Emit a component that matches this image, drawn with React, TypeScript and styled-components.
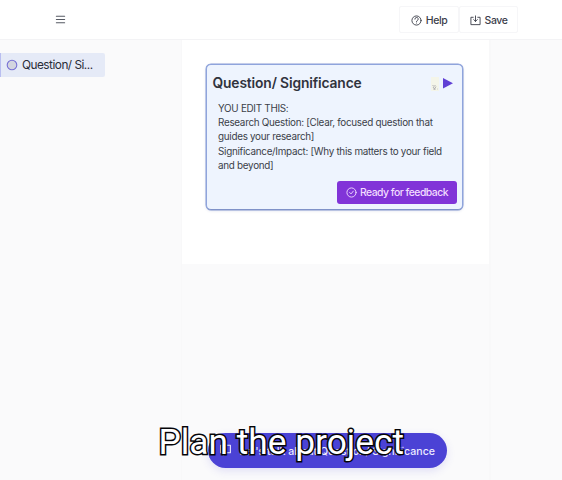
import React from 'react';
import styled, { createGlobalStyle } from 'styled-components';

const GlobalStyle = createGlobalStyle`
  *, *::before, *::after { box-sizing: border-box; }
  body { margin: 0; background: #fafafb; font-family: Inter, sans-serif; overflow: hidden; }
`;

const Page = styled.div`
  position: relative;
  display: flex;
  flex-direction: column;
  width: 562px;
  height: 480px;
  overflow: hidden;
  background: #fafafb;
  color: #30333d;
`;

const Header = styled.header`
  display: flex;
  align-items: center;
  justify-content: space-between;
  flex: none;
  height: 40px;
  padding: 0 44px 0 55px;
  background: #fff;
  border-bottom: 1px solid #f3f3f5;
`;

const MenuButton = styled.button`
  display: flex;
  padding: 0;
  border: 0;
  background: none;
  color: #555963;
`;

const Actions = styled.div`
  display: flex;
`;

const ActionButton = styled.button<{ $width: number }>`
  display: flex;
  align-items: center;
  justify-content: center;
  gap: 4px;
  width: ${(p) => p.$width}px;
  height: 27px;
  padding: 1px 0 0;
  border: 1px solid #f6f6f8;
  border-radius: 2px;
  background: #fff;
  color: #3c404a;
  font: 500 10.5px Inter, sans-serif;
  letter-spacing: -0.4px;
`;

const Body = styled.div`
  display: grid;
  grid-template-columns: 182px 307px 1fr;
  flex: 1;
`;

const Sidebar = styled.aside`
  padding-top: 13px;
  border-right: 1px solid #f8f8f9;
`;

const NavItem = styled.a`
  display: flex;
  align-items: center;
  gap: 4px;
  width: 105px;
  height: 24px;
  padding: 0 0 0 5px;
  border-left: 1px solid #b9bef0;
  border-radius: 0 2px 2px 0;
  background: #e5eaf7;
  color: #292c38;
  font-size: 11.8px;
  letter-spacing: -0.5px;
  white-space: nowrap;
`;

const Sheet = styled.main`
  height: 224px;
  padding: 24px 26px 0 24px;
  background: #fff;
`;

const Rail = styled.aside`
  border-left: 2px solid #f8f8f9;
`;

const Card = styled.section`
  display: flex;
  flex-direction: column;
  height: 146px;
  padding: 8px 5px 5px 5.5px;
  border: 1px solid #8fa4dc;
  border-bottom-color: #7f92c8;
  border-radius: 5px;
  background: #eef4fe;
  box-shadow: 0 1px 3px #33448826, 0 0 0 0.5px #8fa4dc;
`;

const CardHeader = styled.div`
  display: flex;
  align-items: center;
  justify-content: space-between;
  height: 21px;
  padding-right: 3px;
`;

const Title = styled.h2`
  margin: 0;
  font-size: 13.8px;
  font-weight: 600;
  line-height: 21px;
  letter-spacing: -0.13px;
  white-space: nowrap;
`;

const Markers = styled.div`
  display: flex;
`;

const Copy = styled.div`
  margin: 7px 0 0 5.5px;
  color: #3b3f49;
  font-size: 9.9px;
  line-height: 14.2px;
  letter-spacing: -0.29px;
  white-space: nowrap;
`;

const FeedbackButton = styled.button`
  display: flex;
  align-items: center;
  justify-content: center;
  align-self: flex-end;
  gap: 3px;
  width: 120px;
  height: 23px;
  margin-top: auto;
  padding: 0;
  border: 0;
  border-radius: 3px;
  background: #8134d8;
  color: #f2ddff;
  font: 500 10.4px Inter, sans-serif;
  letter-spacing: -0.5px;
  white-space: nowrap;
`;

const TalkButton = styled.button`
  position: absolute;
  left: 208px;
  bottom: 12px;
  display: flex;
  align-items: center;
  justify-content: space-between;
  width: 239px;
  height: 35px;
  padding: 1px 12px 0 11px;
  border: 0;
  border-radius: 18px;
  background: #4b42d5;
  box-shadow: 0 3px 8px #5048d526;
  color: #eeeaff;
  font: 500 10.6px Inter, sans-serif;
  white-space: nowrap;

  svg { margin-bottom: 3px; }
`;

const Caption = styled.div`
  position: absolute;
  left: 158.5px;
  top: 422px;
  color: #fff;
  font: 400 35.3px/40px Roboto, sans-serif;
  white-space: nowrap;
  -webkit-text-stroke: 3px #050508;
  paint-order: stroke fill;
`;

const Icon = ({ size, children, weight = 2 }: { size: number; children: React.ReactNode; weight?: number }) => (
  <svg width={size} height={size} viewBox="0 0 24 24" fill="none" stroke="currentColor"
    strokeWidth={weight} strokeLinecap="round" strokeLinejoin="round">
    {children}
  </svg>
);

export default function App() {
  return (
    <Page>
      <GlobalStyle />
      <Header>
        <MenuButton aria-label="Menu">
          <Icon size={11} weight={2.4}><path d="M3 5h18M3 12h18M3 19h18" /></Icon>
        </MenuButton>
        <Actions>
          <ActionButton $width={60}>
            <Icon size={11}>
              <circle cx="12" cy="12" r="10" />
              <path d="M8.5 9a3.6 3.6 0 1 1 5 3.2c-1 .5-1.5 1-1.5 2M12 17.5h.01" />
            </Icon>
            Help
          </ActionButton>
          <ActionButton $width={59}>
            <Icon size={11}>
              <path d="M7 5H2v16h20V5h-5M12 2v12M8 10l4 4 4-4" />
            </Icon>
            Save
          </ActionButton>
        </Actions>
      </Header>
      <Body>
        <Sidebar>
          <NavItem>
            <svg width="12" height="12" viewBox="0 0 12 12">
              <circle cx="6" cy="6" r="4.8" fill="#d3d5df" stroke="#7770d5" strokeWidth="1.1" />
            </svg>
            Question/ Si...
          </NavItem>
        </Sidebar>
        <Sheet>
          <Card>
            <CardHeader>
              <Title>Question/ Significance</Title>
              <Markers>
                <svg width="23" height="16" viewBox="0 0 23 16">
                  <path d="M0 1h8v14H0z" fill="#f4f5e9" />
                  <path d="m1.5 9 1.5 1.5L4.5 9M2 11l1.5 2L5 10.5M2.5 13.3h2M6.5 13h.5" fill="none" stroke="#aaa9ae" strokeWidth=".9" />
                  <path d="M12 2v10.5l10-5.2z" fill="#6040d5" />
                </svg>
              </Markers>
            </CardHeader>
            <Copy>
              YOU EDIT THIS:<br />
              Research Question: [Clear, focused question that<br />
              guides your research]<br />
              Significance/Impact: [Why this matters to your field<br />
              and beyond]
            </Copy>
            <FeedbackButton>
              <Icon size={11}>
                <circle cx="12" cy="12" r="10" />
                <path d="m8 12 3 3 5-6" />
              </Icon>
              Ready for feedback
            </FeedbackButton>
          </Card>
        </Sheet>
        <Rail />
      </Body>
      <TalkButton>
        <Icon size={13}><path d="M3 4h18v14h-8l-5 4v-4H3z" /></Icon>
        Let's talk about Question/ Significance
      </TalkButton>
      <Caption>Plan the project</Caption>
    </Page>
  );
}
